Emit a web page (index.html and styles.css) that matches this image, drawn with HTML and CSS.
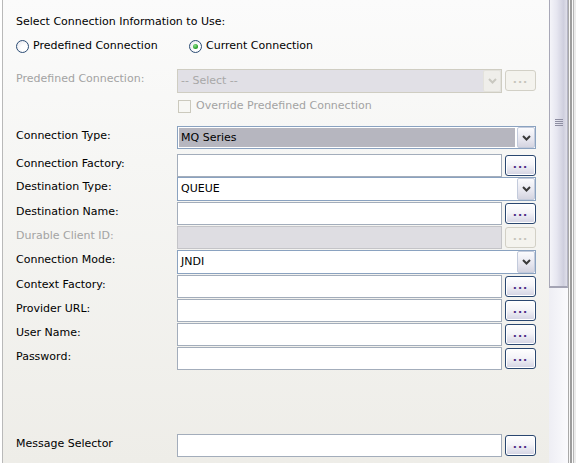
FILE: index.html
```html
<!DOCTYPE html>
<html>
<head>
<meta charset="utf-8">
<link rel="stylesheet" href="styles.css">
</head>
<body>
<div class="window">
  <div class="panel">
    <div class="title">Select Connection Information to Use:</div>
    <div class="radios">
      <label class="radio first"><span class="rb"></span>Predefined Connection</label>
      <label class="radio"><span class="rb checked"></span>Current Connection</label>
    </div>
    <div class="row h24 pre">
      <span class="lbl dis">Predefined Connection:</span>
      <div class="combo disabled"><span class="val">-- Select --</span><span class="arrow"><svg width="9" height="6" viewBox="0 0 9 6"><path d="M1 1 L4.5 4.5 L8 1" /></svg></span></div>
      <span class="btn disabled">...</span>
    </div>
    <div class="check-row"><span class="cb"></span><span class="dis">Override Predefined Connection</span></div>
    <div class="form">
      <div class="row h23">
        <span class="lbl">Connection Type:</span>
        <div class="combo wide"><span class="val sel">MQ Series</span><span class="arrow"><svg width="9" height="6" viewBox="0 0 9 6"><path d="M1 1 L4.5 4.5 L8 1" /></svg></span></div>
      </div>
      <div class="row h23 g5">
        <span class="lbl">Connection Factory:</span>
        <span class="input"></span>
        <span class="btn">...</span>
      </div>
      <div class="row h24">
        <span class="lbl">Destination Type:</span>
        <div class="combo wide"><span class="val">QUEUE</span><span class="arrow"><svg width="9" height="6" viewBox="0 0 9 6"><path d="M1 1 L4.5 4.5 L8 1" /></svg></span></div>
      </div>
      <div class="row h23 g1">
        <span class="lbl">Destination Name:</span>
        <span class="input"></span>
        <span class="btn">...</span>
      </div>
      <div class="row h23 g1">
        <span class="lbl dis">Durable Client ID:</span>
        <span class="input disabled"></span>
        <span class="btn disabled">...</span>
      </div>
      <div class="row h24 g1">
        <span class="lbl">Connection Mode:</span>
        <div class="combo wide"><span class="val">JNDI</span><span class="arrow"><svg width="9" height="6" viewBox="0 0 9 6"><path d="M1 1 L4.5 4.5 L8 1" /></svg></span></div>
      </div>
      <div class="row h23 g1">
        <span class="lbl">Context Factory:</span>
        <span class="input"></span>
        <span class="btn">...</span>
      </div>
      <div class="row h23 g1">
        <span class="lbl">Provider URL:</span>
        <span class="input"></span>
        <span class="btn">...</span>
      </div>
      <div class="row h23 g1">
        <span class="lbl">User Name:</span>
        <span class="input"></span>
        <span class="btn">...</span>
      </div>
      <div class="row h23 g1">
        <span class="lbl">Password:</span>
        <span class="input"></span>
        <span class="btn">...</span>
      </div>
      <div class="row h23 g64">
        <span class="lbl">Message Selector</span>
        <span class="input"></span>
        <span class="btn">...</span>
      </div>
    </div>
  </div>
  <div class="scroll">
    <div class="thumb">
      <div class="grip"><i></i><i></i><i></i><i></i></div>
    </div>
  </div>
  <div class="frame"></div>
</div>
</body>
</html>
```

FILE: styles.css
```css
html, body {
  margin: 0;
  padding: 0;
}
body {
  width: 576px;
  height: 463px;
  overflow: hidden;
  background: #ffffff;
  font-family: "DejaVu Sans", Verdana, sans-serif;
  font-size: 11px;
  color: #000;
}
.window {
  display: flex;
  height: 463px;
}
.panel {
  width: 547px;
  box-sizing: border-box;
  margin-left: 2px;
  border-left: 1px solid #b9b9b9;
  padding: 15px 0 0 13px;
  background: linear-gradient(#fbfbfb, #f6f6f4 35%, #eeede8);
  display: flex;
  flex-direction: column;
}
.title {
  line-height: 14px;
  height: 14px;
  white-space: nowrap;
}
.radios {
  margin-top: 10px;
  height: 14px;
  display: flex;
  align-items: center;
}
.radio {
  display: flex;
  align-items: center;
  gap: 4px;
  line-height: 14px;
  white-space: nowrap;
}
.radio.first {
  width: 173px;
}
.rb {
  width: 13px;
  height: 13px;
  box-sizing: border-box;
  border-radius: 50%;
  border: 1px solid #2b4c74;
  background: radial-gradient(circle at 65% 65%, #ffffff 30%, #e4e4ea 100%);
  display: flex;
  align-items: center;
  justify-content: center;
}
.rb.checked::after {
  content: "";
  width: 5px;
  height: 5px;
  border-radius: 50%;
  background: radial-gradient(circle at 40% 35%, #8fe08f, #2ea32e 60%, #1e7e1e);
}
.dis {
  color: #a3a3a3;
}
.row {
  display: grid;
  grid-template-columns: 158px 325px 31px;
  column-gap: 3px;
  align-items: start;
}
.h23 { height: 23px; }
.h24 { height: 24px; }
.g1 { margin-top: 1px; }
.g5 { margin-top: 5px; }
.g64 { margin-top: 64px; }
.pre {
  margin-top: 16px;
}
.lbl {
  line-height: 14px;
  padding-top: 3px;
  white-space: nowrap;
}
.check-row {
  margin-top: 6px;
  height: 14px;
  padding-left: 162px;
  display: flex;
  align-items: center;
  gap: 5px;
  line-height: 14px;
  white-space: nowrap;
}
.cb {
  width: 13px;
  height: 13px;
  box-sizing: border-box;
  border: 1px solid #cbc9bd;
  background: #f7f7f4;
}
.form {
  margin-top: 13px;
  display: flex;
  flex-direction: column;
}
.input {
  height: 100%;
  box-sizing: border-box;
  border: 1px solid #a3adbb;
  background: #ffffff;
}
.input.disabled {
  background: #dedde2;
  border-color: #c4c4c8;
}
.combo {
  height: 100%;
  box-sizing: border-box;
  border: 1px solid #8aa2c0;
  background: #ffffff;
  display: flex;
  align-items: stretch;
}
.combo.wide {
  grid-column: 2 / 4;
}
.combo.disabled {
  background: #e1e0e6;
  border-color: #cfcdc2;
  color: #a8a8a8;
}
.val {
  flex: 1;
  padding-left: 3px;
  display: flex;
  align-items: center;
  line-height: 14px;
  white-space: nowrap;
}
.val.sel {
  margin: 1px 2px 1px 1px;
  padding-left: 2px;
  background: #b6b6bf;
}
.arrow {
  width: 18px;
  box-sizing: border-box;
  border: 1px solid #c3cbdc;
  border-radius: 2px;
  background: linear-gradient(#fbfbfd, #e6e6ef 60%, #d4d4e0);
  display: flex;
  align-items: center;
  justify-content: center;
}
.arrow svg path {
  fill: none;
  stroke: #3a3a3a;
  stroke-width: 2;
}
.combo.disabled .arrow {
  background: #efeeea;
  border-color: #e3e2dc;
}
.combo.disabled .arrow svg path {
  stroke: #c9c8c0;
}
.btn {
  margin-top: 1px;
  height: 21px;
  box-sizing: border-box;
  border: 1px solid #2a4770;
  border-radius: 3px;
  background: linear-gradient(#ffffff, #f4f4f8 45%, #d3d3e3);
  box-shadow: inset 0 0 0 1px #ffffff;
  color: #4e2f86;
  font-size: 11px;
  line-height: 17px;
  letter-spacing: 1px;
  text-align: center;
  font-weight: bold;
}
.btn.disabled {
  border-color: #d2d0c6;
  background: #f4f3ee;
  box-shadow: none;
  color: #c6c5bc;
}
.scroll {
  width: 19px;
  height: 463px;
  background: linear-gradient(to right, #eeeef4, #fafafd);
  display: flex;
  flex-direction: column;
}
.thumb {
  height: 288px;
  box-sizing: border-box;
  border-left: 1px solid #a8a8b8;
  border-right: 1px solid #b4b4c4;
  border-bottom: 2px solid #a4a4b4;
  background: linear-gradient(to right, #f4f4f9, #e6e6f0 40%, #cfcfde 80%, #e0e0ea);
  padding-top: 119px;
  display: flex;
  flex-direction: column;
  align-items: center;
}
.grip {
  display: flex;
  flex-direction: column;
  gap: 1px;
}
.grip i {
  display: block;
  width: 8px;
  height: 1px;
  background: #8e8ea2;
}
.frame {
  width: 8px;
  height: 463px;
  background: linear-gradient(to right, #a9a9a9 0 1px, #f7f7f7 1px 2px, #9d9d9d 2px 4px, #fbfbfb 4px 5px, #b5b5b5 5px 6px, #ececec 6px 8px);
}
```
